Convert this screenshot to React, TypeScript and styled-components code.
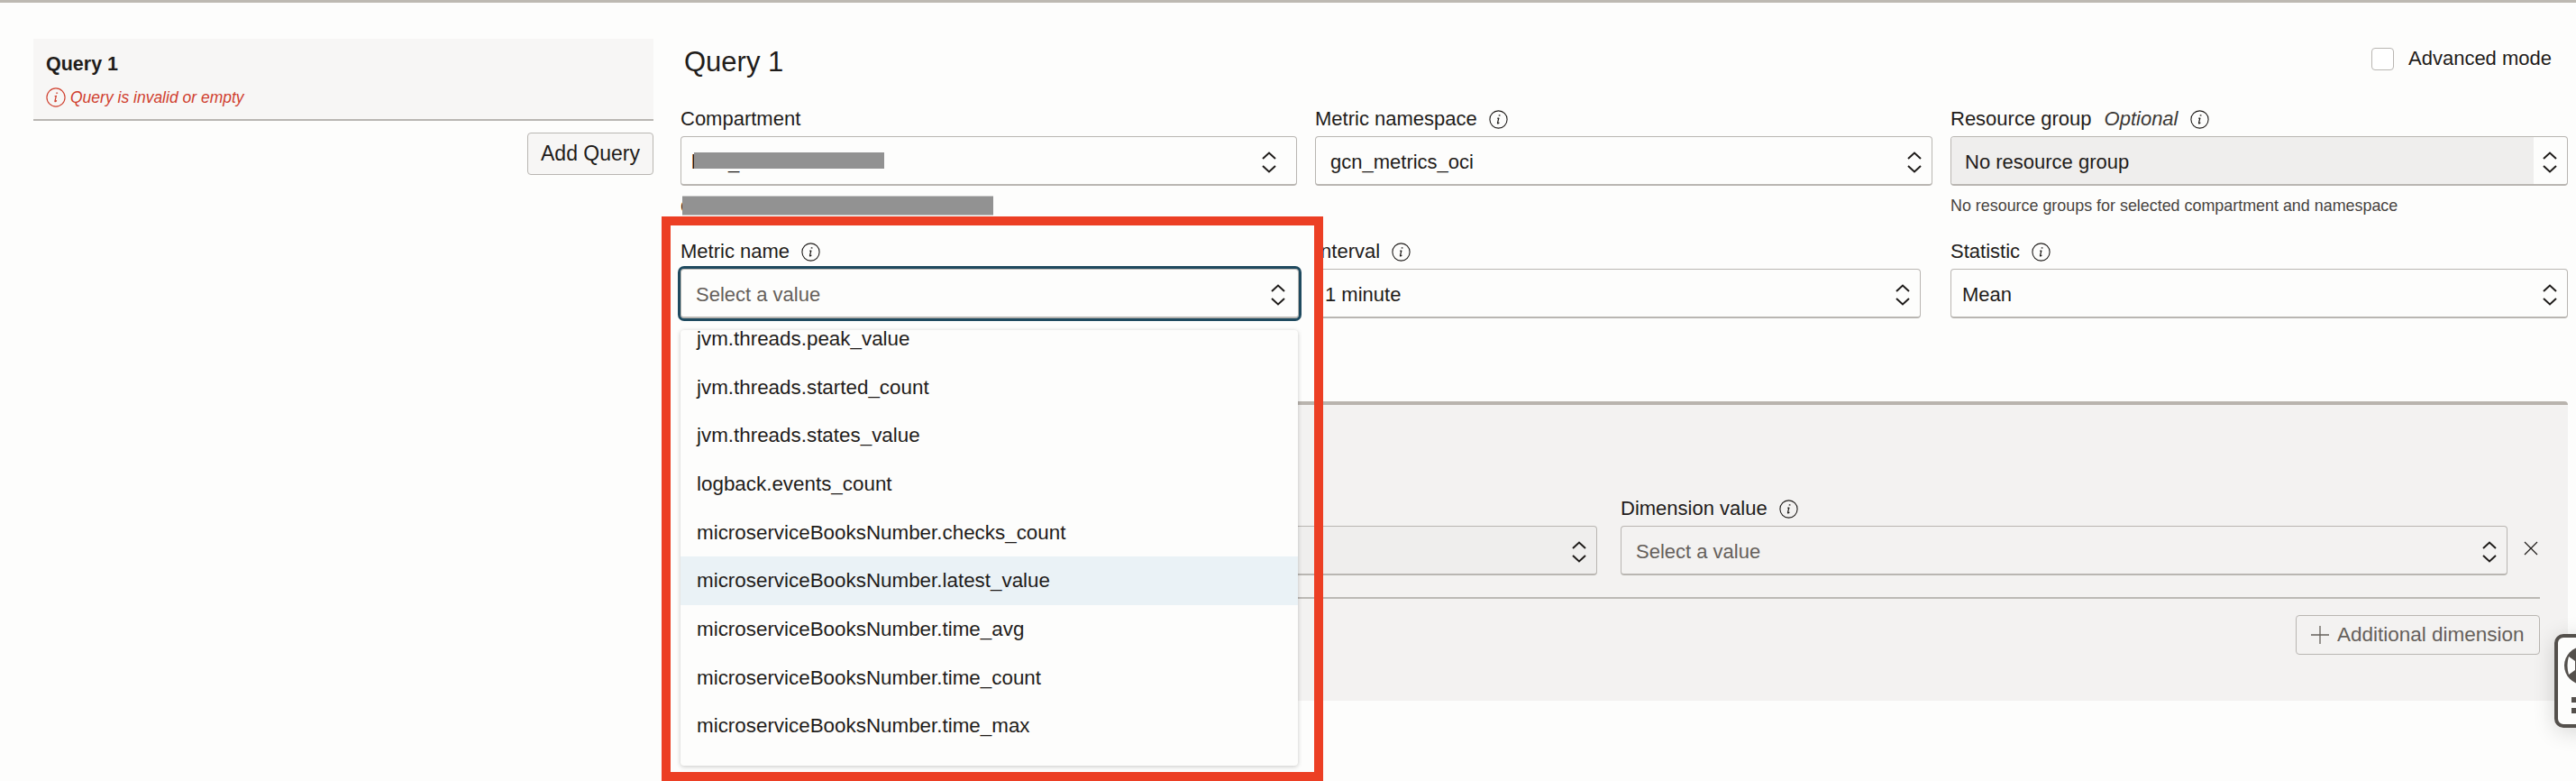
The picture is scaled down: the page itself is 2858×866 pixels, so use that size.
import React from 'react';
import styled, { createGlobalStyle } from 'styled-components';

const Global = createGlobalStyle`
  html, body { margin: 0; padding: 0; background: #fdfdfc; }
  * { box-sizing: border-box; }
  body { font-family: "Liberation Sans", Arial, sans-serif; color: #1f1c1a; }
`;

const Page = styled.div`
  position: relative;
  width: 2858px;
  height: 866px;
  overflow: hidden;
  border-top: 3px solid #bdb9b2;
  display: flex;
  font-size: 22px;
`;

const Sidebar = styled.aside`
  width: 688px;
  margin: 40px 0 0 37px;
  flex: none;
  display: flex;
  flex-direction: column;
  align-items: flex-end;
`;

const QueryTab = styled.div`
  align-self: stretch;
  height: 91px;
  padding: 14px 14px 0;
  background: #f7f6f5;
  border-bottom: 2px solid #b9b6b2;
`;

const TabTitle = styled.div`
  font-size: 21.5px;
  line-height: 28px;
  font-weight: 700;
`;

const TabError = styled.div`
  display: flex;
  align-items: center;
  gap: 5px;
  margin-top: 12px;
  font-size: 17.5px;
  font-style: italic;
  color: #d0402f;
`;

const AddButton = styled.button`
  margin-top: 13px;
  width: 140px;
  height: 47px;
  padding: 0;
  font: inherit;
  font-size: 23px;
  color: #1f1c1a;
  background: #f7f6f5;
  border: 1px solid #b9b6b2;
  border-radius: 4px;
`;

const Main = styled.main`
  margin-left: 30px;
  width: 2094px;
  flex: none;
  display: flex;
  flex-direction: column;
`;

const Header = styled.div`
  height: 115px;
  padding-top: 47px;
  display: flex;
  justify-content: space-between;
  align-items: flex-start;
`;

const Title = styled.h2`
  margin: 0;
  padding-left: 4px;
  font-size: 31px;
  line-height: 38px;
  font-weight: 400;
`;

const Advanced = styled.label`
  display: flex;
  align-items: center;
  gap: 16px;
  margin: 2px 18px 0 0;
`;

const CheckBox = styled.span`
  width: 25px;
  height: 25px;
  border: 1px solid #b9b6b2;
  border-radius: 4px;
  background: #fff;
`;

const FieldGrid = styled.div<{ $mt?: number }>`
  display: grid;
  grid-template-columns: 704px 705px 685px;
  margin-top: ${p => p.$mt ?? 0}px;
`;

const Field = styled.div<{ $pr?: number }>`
  display: flex;
  flex-direction: column;
  min-width: 0;
  padding-right: ${p => p.$pr ?? 0}px;
`;

const Label = styled.div`
  display: flex;
  align-items: center;
  gap: 13px;
  height: 28px;
  margin-bottom: 5px;
`;

const Optional = styled.em`
  margin-left: 14px;
  font-style: italic;
  color: #3b3835;
`;

const Select = styled.div<{ $focus?: boolean; $muted?: boolean; $bg?: string; $pl?: number; $pr?: number }>`
  position: relative;
  height: 55px;
  display: flex;
  align-items: center;
  justify-content: space-between;
  padding: 3px ${p => p.$pr ?? 10}px 0 ${p => p.$pl ?? 16}px;
  background: ${p => p.$bg ?? '#fdfdfc'};
  border: 1px solid #b9b6b2;
  border-bottom-width: 2px;
  border-radius: 4px;
  color: ${p => (p.$muted ? '#65605b' : '#1f1c1a')};
  ${p => p.$focus && 'outline: 3px solid #1f4a5f; outline-offset: 0;'}
`;

const DisabledFill = styled.div`
  position: absolute;
  inset: 0 37px 0 0;
  background: #efeeed;
  display: flex;
  align-items: center;
  padding: 3px 0 0 15px;
  border-radius: 3px 0 0 3px;
`;

const Hint = styled.div`
  font-size: 17.9px;
  line-height: 20px;
  color: #47433f;
  margin-top: 12px;
  height: 20px;
`;

const Redacted = styled.span<{ $w: number; $h: number; $left: number }>`
  position: absolute;
  left: ${p => p.$left}px;
  top: 50%;
  transform: translateY(-50%);
  width: ${p => p.$w}px;
  height: ${p => p.$h}px;
  background: #929292;
`;

const Peek = styled.span`
  margin-left: 36px;
`;

const RedactedHint = styled.div`
  position: relative;
  height: 21px;
  margin-top: 11px;
  font-size: 22px;
  line-height: 21px;
`;

const Panel = styled.section`
  margin-top: 92px;
  width: 2094px;
  height: 332px;
  display: flex;
  flex-direction: column;
  justify-content: flex-end;
  padding: 0 31px 51px 20px;
  background: #f3f2f1;
  border-top: 4px solid #b9b4ae;
  border-radius: 4px 4px 0 0;
`;

const DimensionRow = styled.div`
  display: grid;
  column-gap: 26px;
  grid-template-columns: 997px 984px 1fr;
  align-items: end;
  padding-bottom: 24px;
  border-bottom: 2px solid #bcb9b5;
`;

const CloseCell = styled.div`
  height: 55px;
  padding-bottom: 6px;
  display: flex;
  align-items: center;
  margin-left: -8px;
`;

const PanelFooter = styled.div`
  display: flex;
  justify-content: flex-end;
  margin-top: 18px;
`;

const AddDimension = styled.button`
  width: 271px;
  height: 44px;
  display: flex;
  align-items: center;
  gap: 9px;
  padding: 0 0 0 16px;
  font: inherit;
  font-size: 22.5px;
  white-space: nowrap;
  color: #65605b;
  background: #f3f2f1;
  border: 1px solid #b9b6b2;
  border-radius: 4px;
`;

const Highlight = styled.div`
  position: absolute;
  left: 734px;
  top: 237px;
  width: 734px;
  height: 626px;
  border: 10px solid #ec3f24;
  pointer-events: none;
`;

const Menu = styled.ul`
  position: absolute;
  left: 755px;
  top: 363px;
  width: 685px;
  height: 483px;
  margin: 0;
  padding: 0;
  list-style: none;
  overflow: hidden;
  font-size: 22.4px;
  background: #fdfdfc;
  border-radius: 4px;
  box-shadow: 0 1px 5px rgba(0, 0, 0, 0.22);
`;

const MenuItem = styled.li<{ $active?: boolean; $first?: boolean }>`
  height: 53.7px;
  display: flex;
  align-items: center;
  padding-left: 18px;
  background: ${p => (p.$active ? '#eaf2f6' : 'transparent')};
  ${p => p.$first && 'margin-top: -17px;'}
`;

const HelpWidget = styled.div`
  position: absolute;
  left: 2834px;
  top: 700px;
  width: 60px;
  height: 104px;
  background: #fdfdfc;
  border: 4px solid #54504c;
  border-radius: 10px;
  box-shadow: 0 4px 24px rgba(0, 0, 0, 0.16);
  display: flex;
  flex-direction: column;
  padding: 10px 0 0 7px;
  gap: 14px;
`;

const Dots = styled.div`
  display: grid;
  grid-template-columns: repeat(2, 6px);
  gap: 6px;
  margin-left: 8px;
`;

const Dot = styled.span`
  width: 6px;
  height: 6px;
  background: #54504c;
`;

const InfoIcon = ({ color = '#1f1c1a', size = 21 }: { color?: string; size?: number }) => (
  <svg width={size} height={size} viewBox="0 0 21 21" fill="none" style={{ flex: 'none' }}>
    <circle cx="10.5" cy="10.5" r="9.6" stroke={color} strokeWidth="1.1" />
    <path d="M11.2 5.9h.8M10.8 9l-1.3 5.4c-.1.7.6.7 1.5-.3M9.7 9.2h1.2" stroke={color} strokeWidth="1.2" strokeLinecap="round" />
  </svg>
);

const Chevrons = () => (
  <svg width="18" height="24" viewBox="0 0 18 24" fill="none" style={{ flex: 'none' }}>
    <path d="M2 8l7-6.5L16 8M2 16l7 6.5L16 16" stroke="#1f1c1a" strokeWidth="2" />
  </svg>
);

const metrics = [
  'jvm.threads.peak_value',
  'jvm.threads.started_count',
  'jvm.threads.states_value',
  'logback.events_count',
  'microserviceBooksNumber.checks_count',
  'microserviceBooksNumber.latest_value',
  'microserviceBooksNumber.time_avg',
  'microserviceBooksNumber.time_count',
  'microserviceBooksNumber.time_max',
];

export default function App() {
  return (
    <Page>
      <Global />
      <Sidebar>
        <QueryTab>
          <TabTitle>Query 1</TabTitle>
          <TabError>
            <InfoIcon color="#d0402f" size={22} />
            Query is invalid or empty
          </TabError>
        </QueryTab>
        <AddButton>Add Query</AddButton>
      </Sidebar>

      <Main>
        <Header>
          <Title>Query 1</Title>
          <Advanced>
            <CheckBox />
            Advanced mode
          </Advanced>
        </Header>

        <FieldGrid>
          <Field $pr={20}>
            <Label>Compartment</Label>
            <Select $pl={11} $pr={21}>
              <span>
                l<Peek>_</Peek>
              </span>
              <Redacted $left={14} $w={211} $h={18} />
              <Chevrons />
            </Select>
            <RedactedHint>
              c
              <Redacted $left={2} $w={345} $h={21} />
            </RedactedHint>
          </Field>
          <Field $pr={20}>
            <Label>
              Metric namespace <InfoIcon />
            </Label>
            <Select>
              gcn_metrics_oci
              <Chevrons />
            </Select>
          </Field>
          <Field>
            <Label>
              <span>
                Resource group<Optional>Optional</Optional>
              </span>
              <InfoIcon />
            </Label>
            <Select>
              <DisabledFill>No resource group</DisabledFill>
              <span />
              <Chevrons />
            </Select>
            <Hint>No resource groups for selected compartment and namespace</Hint>
          </Field>
        </FieldGrid>

        <FieldGrid $mt={27}>
          <Field $pr={18}>
            <Label>
              Metric name <InfoIcon />
            </Label>
            <Select $focus $muted $pr={13}>
              Select a value
              <Chevrons />
            </Select>
          </Field>
          <Field $pr={33}>
            <Label>
              Interval <InfoIcon />
            </Label>
            <Select $pl={10}>
              1 minute
              <Chevrons />
            </Select>
          </Field>
          <Field>
            <Label>
              Statistic <InfoIcon />
            </Label>
            <Select $pl={12}>
              Mean
              <Chevrons />
            </Select>
          </Field>
        </FieldGrid>

        <Panel>
          <DimensionRow>
            <Field>
              <Label>
                Dimension name <InfoIcon />
              </Label>
              <Select $muted $bg="#efeeed">
                Select a value
                <Chevrons />
              </Select>
            </Field>
            <Field>
              <Label>
                Dimension value <InfoIcon />
              </Label>
              <Select $muted $bg="#f3f2f1">
                Select a value
                <Chevrons />
              </Select>
            </Field>
            <CloseCell>
              <svg width="16" height="16" viewBox="0 0 16 16" fill="none">
                <path d="M1 1l14 14M15 1L1 15" stroke="#1f1c1a" strokeWidth="1.2" />
              </svg>
            </CloseCell>
          </DimensionRow>
          <PanelFooter>
            <AddDimension>
              <svg width="20" height="20" viewBox="0 0 20 20" fill="none" style={{ flex: 'none' }}>
                <path d="M10 0v20M0 10h20" stroke="#65605b" strokeWidth="1.3" />
              </svg>
              Additional dimension
            </AddDimension>
          </PanelFooter>
        </Panel>
      </Main>

      <Menu>
        {metrics.map((m, i) => (
          <MenuItem key={m} $first={i === 0} $active={m === 'microserviceBooksNumber.latest_value'}>
            {m}
          </MenuItem>
        ))}
      </Menu>

      <Highlight />

      <HelpWidget>
        <svg width="42" height="42" viewBox="0 0 42 42" fill="none" style={{ flex: 'none' }}>
          <circle cx="21" cy="21" r="21" fill="#54504c" />
          <path d="M5 11l7 5v10l-7 5c-2-6-2-14 0-20z" fill="#fdfdfc" />
        </svg>
        <Dots>
          <Dot />
          <Dot />
          <Dot />
          <Dot />
        </Dots>
      </HelpWidget>
    </Page>
  );
}
